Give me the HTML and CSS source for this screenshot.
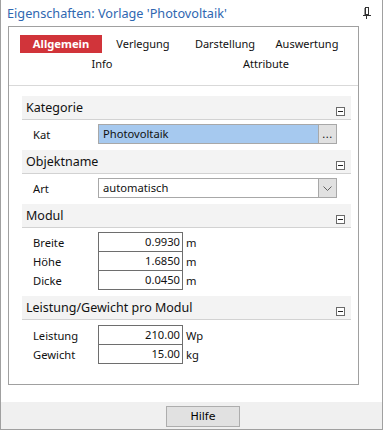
FILE: index.html
```html
<!DOCTYPE html>
<html>
<head>
<meta charset="utf-8">
<link rel="stylesheet" href="styles.css">
</head>
<body>
<div class="window">
  <div class="titlebar">
    <span class="title">Eigenschaften: Vorlage 'Photovoltaik'</span>
    <svg class="pin" width="8" height="12" viewBox="0 0 8 12">
      <rect x="2.5" y="0.5" width="3" height="7" fill="none" stroke="#333" stroke-width="1"/>
      <line x1="2" y1="1" x2="2" y2="8" stroke="#333" stroke-width="1"/>
      <line x1="0" y1="8.5" x2="8" y2="8.5" stroke="#333" stroke-width="1"/>
      <line x1="3.5" y1="9" x2="3.5" y2="12" stroke="#333" stroke-width="1"/>
    </svg>
  </div>
  <div class="panel">
    <div class="tabs">
      <div class="tabrow four">
        <div class="tab active">Allgemein</div>
        <div class="tab">Verlegung</div>
        <div class="tab">Darstellung</div>
        <div class="tab">Auswertung</div>
      </div>
      <div class="tabrow two">
        <div class="tab">Info</div>
        <div class="tab">Attribute</div>
      </div>
    </div>
    <div class="grid">
      <div class="section">
        <div class="shead"><span>Kategorie</span><svg class="collapse" width="9" height="9" viewBox="0 0 9 9"><rect x="0.5" y="0.5" width="8" height="8" fill="#fff" stroke="#6a6a6a"/><line x1="2" y1="4.5" x2="7" y2="4.5" stroke="#222"/></svg></div>
        <div class="row">
          <span class="label">Kat</span>
          <div class="field selected">Photovoltaik</div>
          <div class="fbtn ellipsis">...</div>
        </div>
      </div>
      <div class="section">
        <div class="shead"><span>Objektname</span><svg class="collapse" width="9" height="9" viewBox="0 0 9 9"><rect x="0.5" y="0.5" width="8" height="8" fill="#fff" stroke="#6a6a6a"/><line x1="2" y1="4.5" x2="7" y2="4.5" stroke="#222"/></svg></div>
        <div class="row">
          <span class="label">Art</span>
          <div class="field">automatisch</div>
          <div class="fbtn"><svg width="9" height="5" viewBox="0 0 9 5"><polyline points="0.5,0.5 4.5,4.5 8.5,0.5" fill="none" stroke="#606060"/></svg></div>
        </div>
      </div>
      <div class="section">
        <div class="shead"><span>Modul</span><svg class="collapse" width="9" height="9" viewBox="0 0 9 9"><rect x="0.5" y="0.5" width="8" height="8" fill="#fff" stroke="#6a6a6a"/><line x1="2" y1="4.5" x2="7" y2="4.5" stroke="#222"/></svg></div>
        <div class="numrows">
          <div class="numrow"><span class="label">Breite</span><div class="numbox">0.9930</div><span class="unit">m</span></div>
          <div class="numrow"><span class="label">Höhe</span><div class="numbox">1.6850</div><span class="unit">m</span></div>
          <div class="numrow"><span class="label">Dicke</span><div class="numbox">0.0450</div><span class="unit">m</span></div>
        </div>
      </div>
      <div class="section">
        <div class="shead"><span>Leistung/Gewicht pro Modul</span><svg class="collapse" width="9" height="9" viewBox="0 0 9 9"><rect x="0.5" y="0.5" width="8" height="8" fill="#fff" stroke="#6a6a6a"/><line x1="2" y1="4.5" x2="7" y2="4.5" stroke="#222"/></svg></div>
        <div class="numrows last">
          <div class="numrow"><span class="label">Leistung</span><div class="numbox">210.00</div><span class="unit">Wp</span></div>
          <div class="numrow"><span class="label">Gewicht</span><div class="numbox">15.00</div><span class="unit">kg</span></div>
        </div>
      </div>
    </div>
  </div>
  <div class="spacer"></div>
  <div class="footer">
    <div class="button">Hilfe</div>
  </div>
</div>
</body>
</html>
```
FILE: styles.css
```css
html, body {
  margin: 0;
  padding: 0;
  background: #fff;
}
body {
  font-family: "Noto Sans", "Open Sans", sans-serif;
  font-size: 11.2px;
  color: #111;
}
.window {
  width: 383px;
  height: 430px;
  box-sizing: border-box;
  border: 1px solid #a0a0a0;
  border-top: none;
  background: #fff;
  display: flex;
  flex-direction: column;
}
.titlebar {
  height: 26px;
  flex: none;
  display: flex;
  align-items: center;
  padding-left: 6px;
  padding-right: 11px;
  padding-bottom: 1px;
  box-sizing: border-box;
}
.title {
  color: #2f67b1;
  font-size: 12.7px;
  flex: 1;
  white-space: nowrap;
}
.pin {
  margin-top: 1px;
}
.panel {
  margin-left: 7px;
  width: 351px;
  height: 359px;
  flex: none;
  box-sizing: border-box;
  border: 1px solid #a0a0a0;
}
.tabs {
  padding: 8px 0 12px 11px;
  border-bottom: 1px solid #d9d9d9;
  display: flex;
  flex-direction: column;
  gap: 2px;
}
.tabrow {
  display: grid;
  height: 18px;
}
.tabrow.four {
  grid-template-columns: repeat(4, 82px);
}
.tabrow.two {
  grid-template-columns: repeat(2, 164px);
}
.tab {
  text-align: center;
  line-height: 18px;
  font-size: 11px;
  white-space: nowrap;
}
.tab.active {
  background: #d1343a;
  color: #fff;
  font-weight: bold;
  font-size: 11.2px;
}
.grid {
  margin: 10px 0 0 13px;
  width: 329px;
}
.shead {
  height: 24px;
  box-sizing: border-box;
  background: #f3f3f3;
  border-bottom: 1px solid #d2d2d2;
  display: flex;
  justify-content: space-between;
  align-items: center;
  padding-left: 4px;
  padding-right: 6px;
  font-size: 12.5px;
}
.collapse {
  align-self: flex-end;
  margin-bottom: 3px;
}
.row {
  display: flex;
  align-items: center;
  padding: 4px 0 6px 0;
}
.label {
  width: 65px;
  padding-left: 11px;
  flex: none;
}
.field {
  width: 220px;
  height: 20px;
  box-sizing: border-box;
  border: 1px solid #a8a8a8;
  border-right: none;
  line-height: 18px;
  padding-left: 4px;
}
.field.selected {
  background: #a6c9ef;
}
.fbtn {
  width: 19px;
  height: 20px;
  box-sizing: border-box;
  border: 1px solid #a8a8a8;
  background: #e1e1e1;
  display: flex;
  align-items: center;
  justify-content: center;
}
.ellipsis {
  font-size: 11px;
  line-height: 1;
  align-items: flex-end;
  padding-bottom: 4px;
  letter-spacing: 0.5px;
}
.numrows {
  padding: 4px 0 6px 0;
}
.numrows.last {
  padding-top: 5px;
}
.numrow {
  display: flex;
  align-items: center;
  height: 20px;
}
.numrow + .numrow {
  margin-top: -1px;
}
.numbox {
  width: 85px;
  height: 20px;
  box-sizing: border-box;
  border: 1px solid #6e6e6e;
  text-align: right;
  padding-right: 2px;
  line-height: 18px;
}
.unit {
  margin-left: 3px;
}
.spacer {
  flex: 1;
}
.footer {
  height: 27px;
  flex: none;
  background: #f0f0f0;
  padding: 4px 0 0 165px;
  box-sizing: border-box;
}
.button {
  width: 74px;
  height: 21px;
  box-sizing: border-box;
  border: 1px solid #adadad;
  background: #e1e1e1;
  text-align: center;
  line-height: 19px;
  font-family: "DejaVu Sans", sans-serif;
  font-size: 11px;
  color: #000;
}
```
